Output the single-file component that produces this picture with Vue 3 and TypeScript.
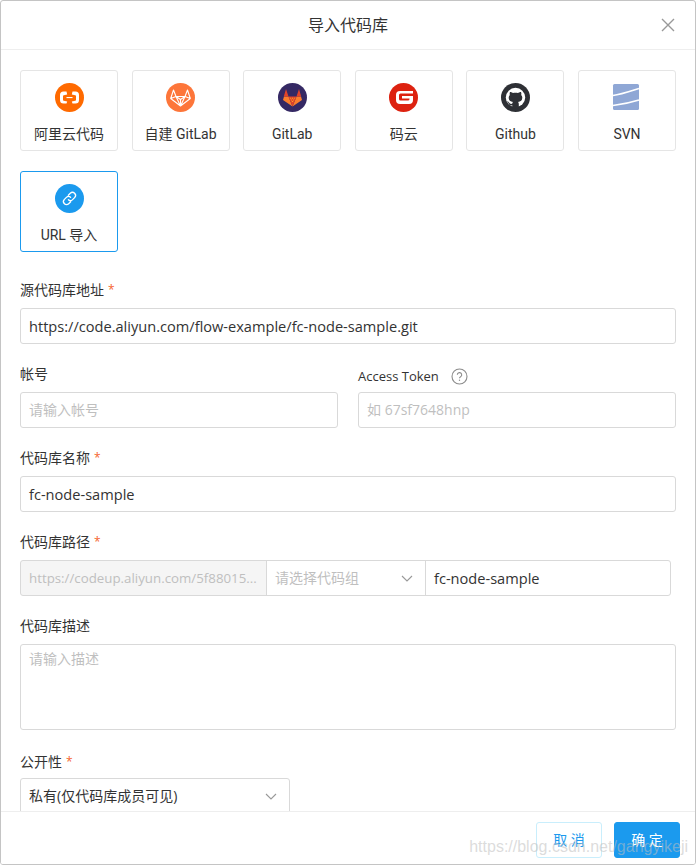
<script setup lang="ts">
const sources = ['阿里云代码', '自建 GitLab', 'GitLab', '码云', 'Github', 'SVN', 'URL 导入']
</script>

<template>
  <div class="dialog">
    <header class="head">
      <span class="title">导入代码库</span>
      <svg class="close" width="14" height="14" viewBox="0 0 14 14" fill="none" stroke="#999" stroke-width="1.4">
        <path d="M1 1l12 12M13 1L1 13" />
      </svg>
    </header>
    <main class="body">
      <div class="cards">
        <div v-for="(s, i) in sources" :key="s" class="card" :class="{ active: i === 6 }">
          <svg class="logo" width="29" height="29" viewBox="0 0 29 29">
            <template v-if="i === 0">
              <circle cx="14.5" cy="14.5" r="14.5" fill="#ff6a00" />
              <path d="M11.500 8.500H8.500Q5 8.500 5 12v5q0 3.500 3.500 3.500h3l.7-2-3.400-.8q-.8-.2-.8-1v-3.400q0-.8.8-1l3.400-.8zM17.500 8.500h3Q24 8.500 24 12v5q0 3.500-3.500 3.500h-3l-.7-2 3.400-.8q.8-.2.8-1v-3.400q0-.8-.8-1l-3.400-.8z" fill="#fff" />
              <rect x="11.500" y="14" width="6" height="1.100" fill="#fff" />
            </template>
            <template v-else-if="i === 1">
              <circle cx="14.5" cy="14.5" r="14.5" fill="#fd763a" />
              <path d="M7.500 7l-2.800 8.500 9.800 7.500 9.800-7.500L21.500 7l-2.500 6.500H10zM4.700 15.500l5.300-2 4.500 9.500M24.300 15.500l-5.300-2-4.500 9.500M10 13.500l4.500 3 4.500-3M14.500 16.500V23" fill="none" stroke="#fff" stroke-width="1.100" stroke-linejoin="round" />
            </template>
            <template v-else-if="i === 2">
              <circle cx="14.5" cy="14.500" r="14.500" fill="#352964" />
              <path d="M6 13.500h4.500l4 10zM23 13.500h-4.500l-4 10zM5 17l1-3.500 8.500 10zM24 17l-1-3.500-8.500 10z" fill="#fc7d2c" />
              <path d="M5.800 13.500L8 6l2.500 7.500zM23.200 13.500L21 6l-2.500 7.500z" fill="#e24329" />
              <path d="M10.500 13.500h8l-4 10z" fill="#e24329" />
              <path d="M11.800 14.800h1v1h-1zM13.900 14.800h1.200v1h-1.200zM16.200 14.800h1v1h-1zM12.900 16.400h1v1h-1zM15.100 16.400h1v1h-1zM13.900 18h1.200v1h-1.200z" fill="#fca326" />
            </template>
            <template v-else-if="i === 3">
              <circle cx="14.5" cy="14.5" r="14.5" fill="#dd2210" />
              <path d="M7 12q0-4 4-4h13v2.500H11.500q-1.500 0-1.500 1.500v4q0 1.500 1.500 1.500H19q1.500 0 1.500-1.500v-.5H13V13h11v4q0 4-4 4h-9q-4 0-4-4z" fill="#fff" />
            </template>
            <template v-else-if="i === 4">
              <circle cx="14.5" cy="14.5" r="14.500" fill="#2e3035" />
              <circle cx="14.5" cy="14.500" r="9.700" fill="#fff" />
              <path d="M11.300 25.500v-3.200c-2.600.5-3.400-.9-3.700-1.900-.2-.5-.7-1-1.200-1.300-.5-.3-.3-.6.300-.5 1 .2 1.500 1 2 1.600.8 1 1.900.8 2.600.4.100-.7.400-1.200.7-1.500-2.700-.3-4.300-1.600-4.300-4.500 0-1 .4-2 1.100-2.700-.2-.7-.3-1.700.2-2.900 0 0 1-.3 3 1.100 1.700-.5 3.300-.5 5 0 2-1.400 3-1.100 3-1.100.5 1.200.4 2.200.2 2.900.7.700 1.100 1.700 1.100 2.700 0 2.900-1.600 4.200-4.300 4.500.5.400.8 1.100.8 2v4.700z" fill="#2e3035" />
            </template>
            <template v-else-if="i === 5">
              <rect x="1" y="1" width="26" height="26" rx="1.500" fill="#8fa7d5" />
              <path d="M27 5.500C19 8 9 11.500 1 12.500M27 17C19 19.500 9 21.500 1 22.500" fill="none" stroke="#fff" stroke-width="1.700" />
            </template>
            <template v-else>
              <circle cx="14.500" cy="14.500" r="14.500" fill="#1b9aee" />
              <path d="M13.300 11.300l2-2a3 3 0 0 1 4.300 4.300l-2 2a3 3 0 0 1-4.200.1M15.700 17.700l-2 2a3 3 0 0 1-4.300-4.300l2-2a3 3 0 0 1 4.200-.1" fill="none" stroke="#fff" stroke-width="1.300" stroke-linecap="round" />
            </template>
          </svg>
          <span class="card-label">{{ s }}</span>
        </div>
      </div>

      <div class="field">
        <label class="label">源代码库地址<i class="req">*</i></label>
        <div class="input value">https://code.aliyun.com/flow-example/fc-node-sample.git</div>
      </div>

      <div class="two">
        <div class="field">
          <label class="label">帐号</label>
          <div class="input ph">请输入帐号</div>
        </div>
        <div class="field">
          <label class="label token">Access Token
            <svg class="help" width="17" height="17" viewBox="0 0 17 17" fill="none">
              <circle cx="8.500" cy="8.500" r="7.500" stroke="#8c8c8c" stroke-width="1.100" />
              <path d="M6.300 6.800a2.200 2.200 0 1 1 3.300 1.900c-.7.400-1.100.8-1.100 1.600" stroke="#8c8c8c" stroke-width="1.100" />
              <circle cx="8.500" cy="12.300" r=".7" fill="#8c8c8c" />
            </svg>
          </label>
          <div class="input ph">如 67sf7648hnp</div>
        </div>
      </div>

      <div class="field">
        <label class="label">代码库名称<i class="req">*</i></label>
        <div class="input value">fc-node-sample</div>
      </div>

      <div class="field">
        <label class="label">代码库路径<i class="req">*</i></label>
        <div class="path">
          <div class="seg seg-a">https://codeup.aliyun.com/5f88015...</div>
          <div class="seg seg-b">
            <span>请选择代码组</span>
            <svg width="12" height="7" viewBox="0 0 12 7" fill="none" stroke="#999" stroke-width="1.100"><path d="M1 1l5 5 5-5" /></svg>
          </div>
          <div class="seg seg-c">fc-node-sample</div>
        </div>
      </div>

      <div class="field">
        <label class="label">代码库描述</label>
        <div class="input area ph">请输入描述</div>
      </div>

      <div class="field last">
        <label class="label">公开性<i class="req">*</i></label>
        <div class="input select">
          <span>私有(仅代码库成员可见)</span>
          <svg width="12" height="7" viewBox="0 0 12 7" fill="none" stroke="#999" stroke-width="1.100"><path d="M1 1l5 5 5-5" /></svg>
        </div>
      </div>
    </main>
    <footer class="foot">
      <button class="btn ghost">取 消</button>
      <button class="btn primary">确 定</button>
    </footer>
    <div class="mark">https://blog.csdn.net/gangyikeji</div>
  </div>
</template>

<style>
html, body { margin: 0; background: #fff; }
</style>

<style scoped>
.dialog {
  position: relative;
  box-sizing: border-box;
  width: 696px;
  height: 865px;
  display: flex;
  flex-direction: column;
  overflow: hidden;
  background: #fff;
  border: 1px solid #c4c4c4;
  border-radius: 3px;
  font: 14px/20px "Open Sans", "Noto Sans CJK SC", sans-serif;
  color: #333;
}
.head {
  position: relative;
  flex: none;
  height: 49px;
  box-sizing: border-box;
  display: flex;
  align-items: center;
  justify-content: center;
  border-bottom: 1px solid #eee;
}
.title { font-size: 16px; color: #333; }
.close { position: absolute; right: 20px; top: 17px; }
.body {
  flex: 1;
  min-height: 0;
  overflow: hidden;
  padding: 20px 19px 0;
}
.cards {
  display: grid;
  grid-template-columns: repeat(6, 1fr);
  gap: 20px 13.6px;
}
.card {
  box-sizing: border-box;
  height: 81px;
  padding-top: 12px;
  display: flex;
  flex-direction: column;
  align-items: center;
  border: 1px solid #e5e5e5;
  border-radius: 3px;
}
.card.active { border-color: #1b9aee; }
.logo { display: block; }
.card-label {
  margin-top: 12px;
  color: #333;
  font-family: Roboto, "Noto Sans CJK SC", sans-serif;
}
.field { margin-top: 20px; }
.cards + .field { margin-top: 28px; }
.label {
  display: flex;
  align-items: center;
  height: 20px;
  margin-bottom: 8px;
  white-space: pre-wrap;
  color: #333;
}
.label.token {
  box-sizing: content-box;
  padding-top: 2px;
  margin-bottom: 6px;
  font-size: 13px;
}
.req { font-style: normal; font-size: 12px; color: #f5642d; margin-left: 4px; }
.help { margin-left: 9px; }
.input {
  box-sizing: border-box;
  height: 36px;
  padding: 0 8px;
  display: flex;
  align-items: center;
  border: 1px solid #d9d9d9;
  border-radius: 3px;
}
.value { color: #333; font-size: 14.6px; }
.ph { color: #bfbfbf; }
.two { display: grid; grid-template-columns: 1fr 1fr; gap: 20px; }
.path { display: flex; width: 651px; height: 36px; }
.seg {
  box-sizing: border-box;
  height: 36px;
  padding: 0 8px;
  display: flex;
  align-items: center;
  border: 1px solid #d9d9d9;
  white-space: nowrap;
}
.seg-a {
  width: 247px;
  background: #f5f5f5;
  color: #bfbfbf;
  font-size: 13.3px;
  border-radius: 3px 0 0 3px;
}
.seg-b {
  width: 160px;
  margin-left: -1px;
  justify-content: space-between;
  color: #bfbfbf;
  padding-right: 12px;
}
.seg-c {
  flex: 1;
  margin-left: -1px;
  color: #333;
  font-size: 14.6px;
  border-radius: 0 3px 3px 0;
}
.area { height: 86px; align-items: flex-start; padding-top: 4px; }
.select { width: 270px; justify-content: space-between; padding-right: 12px; color: #333; }
.last { margin-top: 22px; }
.last .label { margin-bottom: 6px; }
.foot {
  flex: none;
  height: 53px;
  box-sizing: border-box;
  padding: 10px 15px 0 0;
  display: flex;
  justify-content: flex-end;
  gap: 12px;
  border-top: 1px solid #eee;
  background: #fff;
}
.btn {
  width: 66px;
  height: 36px;
  padding: 0;
  font: inherit;
  border-radius: 3px;
}
.ghost { background: #fff; border: 1px solid #c9eefc; color: #1b9aee; }
.primary { background: #1b9aee; border: 1px solid #1b9aee; color: #fff; }
.mark {
  position: absolute;
  right: 7px;
  bottom: 7px;
  font: 16px/20px "Liberation Sans", Arial, sans-serif;
  color: rgba(190, 190, 190, 0.55);
  white-space: nowrap;
}
</style>
